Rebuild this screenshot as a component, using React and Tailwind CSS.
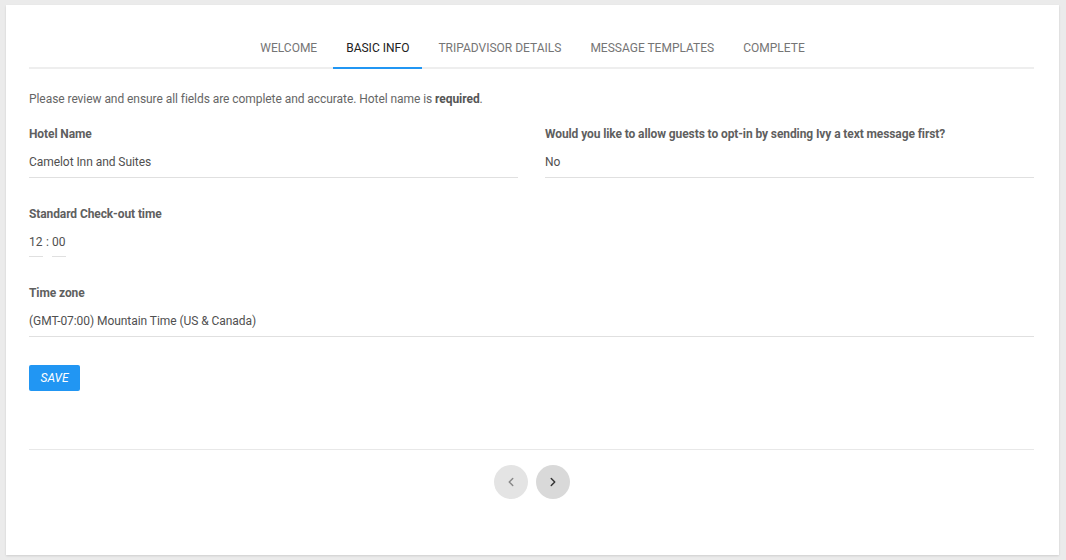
import React from "react";
import { ChevronLeft, ChevronRight } from "lucide-react";

const tabs = ["WELCOME", "BASIC INFO", "TRIPADVISOR DETAILS", "MESSAGE TEMPLATES", "COMPLETE"];

export default function App() {
  return (
    <div className="w-[1066px] h-[560px] bg-[#ebebeb] pt-[5px] px-[6px]" style={{ fontFamily: "Roboto, 'Liberation Sans', sans-serif" }}>
      <div className="bg-white h-[550px] w-[1053px] pt-[24px] pl-[23px] pr-[25px] shadow-[0_1px_2px_rgba(0,0,0,0.12)] flex flex-col">
        <div className="flex justify-center border-b-2 border-[#eeeeee] pl-[2px]">
          <div className="flex gap-[3px] -mb-[2px]">
            {tabs.map((t) => (
              <div
                key={t}
                className={
                  "h-[40px] px-[13px] flex items-center text-[12px] border-b-2 " +
                  (t === "BASIC INFO" ? "border-[#2196f3] text-[#212121]" : "border-transparent text-[#757575]")
                }
              >
                {t}
              </div>
            ))}
          </div>
        </div>

        <p className="mt-[22px] text-[12px] leading-[16px] text-[#666666] tracking-[-0.06px]">
          Please review and ensure all fields are complete and accurate. Hotel name is <b className="font-bold text-[#555]">required</b>.
        </p>

        <div className="mt-[19px] grid grid-cols-2 gap-[27px]">
          <div>
            <div className="text-[12px] leading-[16px] font-bold text-[#5f5f5f] tracking-[-0.1px]">Hotel Name</div>
            <div className="mt-[12px] pb-[7px] border-b border-[#e0e0e0] text-[12px] leading-[16px] text-[#505050] tracking-[-0.06px]">Camelot Inn and Suites</div>
          </div>
          <div>
            <div className="text-[12px] leading-[16px] font-bold text-[#5f5f5f] tracking-[-0.1px]">Would you like to allow guests to opt-in by sending Ivy a text message first?</div>
            <div className="mt-[12px] pb-[7px] border-b border-[#e0e0e0] text-[12px] leading-[16px] text-[#505050]">No</div>
          </div>
        </div>

        <div className="mt-[28px] text-[12px] leading-[16px] font-bold text-[#5f5f5f] tracking-[-0.1px]">Standard Check-out time</div>
        <div className="mt-[12px] flex items-start text-[12px] leading-[16px] text-[#505050]">
          <div className="w-[14px] pb-[6px] border-b border-[#e0e0e0]">12</div>
          <div className="px-[3px]">:</div>
          <div className="w-[14px] pb-[6px] border-b border-[#e0e0e0]">00</div>
        </div>

        <div className="mt-[28px] text-[12px] leading-[16px] font-bold text-[#5f5f5f] tracking-[-0.1px]">Time zone</div>
        <div className="mt-[12px] pb-[7px] border-b border-[#e0e0e0] text-[12px] leading-[16px] text-[#505050] tracking-[-0.06px]">(GMT-07:00) Mountain Time (US &amp; Canada)</div>

        <div className="mt-[28px]">
          <button className="w-[51px] h-[26px] bg-[#2196f3] rounded-[2px] text-white italic text-[12px] flex items-center justify-center">SAVE</button>
        </div>

        <div className="mt-[58px] border-t border-[#e8e8e8]"></div>

        <div className="mt-[15px] flex justify-center gap-[8px] pl-[1px]">
          <div className="w-[34px] h-[34px] rounded-full bg-[#e4e4e4] flex items-center justify-center">
            <ChevronLeft size={14} strokeWidth={2.5} color="#888888" />
          </div>
          <div className="w-[34px] h-[34px] rounded-full bg-[#d9d9d9] flex items-center justify-center">
            <ChevronRight size={14} strokeWidth={2.5} color="#333333" />
          </div>
        </div>
      </div>
    </div>
  );
}
